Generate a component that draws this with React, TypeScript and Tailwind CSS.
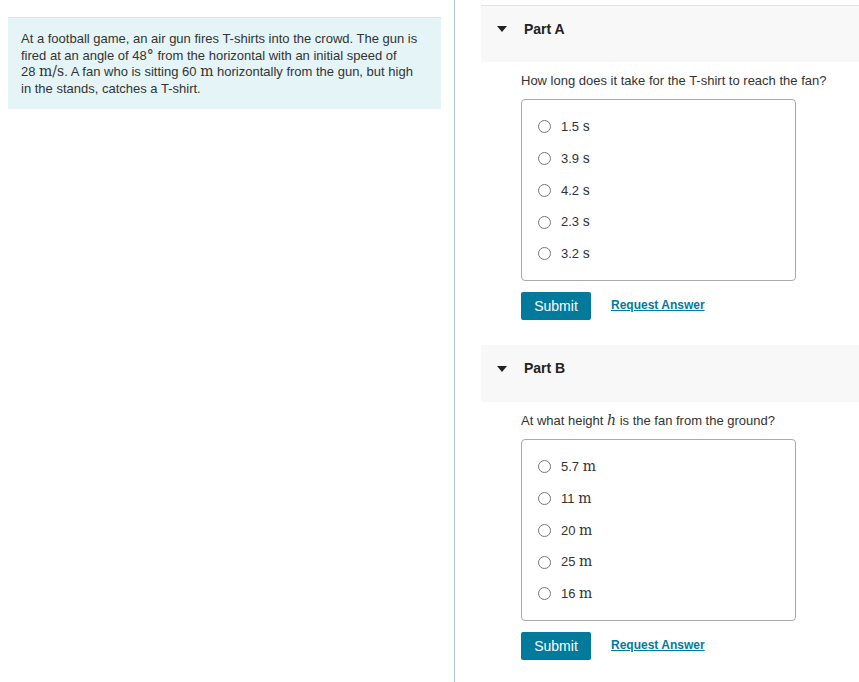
import React from "react";

const sans = { fontFamily: '"Liberation Sans", Arial, sans-serif' };

function M({ children, italic }: { children: React.ReactNode; italic?: boolean }) {
  return (
    <span
      className={`font-serif text-[14px] leading-none ${italic ? "italic" : ""}`}
      style={{ fontFamily: '"DejaVu Serif", "Liberation Serif", serif' }}
    >
      {children}
    </span>
  );
}

function Radio({ num, unit }: { num: string; unit: string }) {
  return (
    <label className="flex items-center h-[31.75px]">
      <span className="w-[13px] h-[13px] rounded-full border border-[#767676] bg-white mr-[10px]" />
      <span>
        {num} <M>{unit}</M>
      </span>
    </label>
  );
}

function Part({
  title,
  question,
  options,
  unit,
  border,
}: {
  title: string;
  question: React.ReactNode;
  options: string[];
  unit: string;
  border?: boolean;
}) {
  return (
    <div>
      <div
        className={`flex items-center h-[57px] bg-[#f8f8f8] pl-[16px] pb-[10px] ${
          border ? "border-t border-[#e2e2e2]" : ""
        }`}
      >
        <span className="w-0 h-0 border-l-[5px] border-r-[5px] border-t-[6px] border-l-transparent border-r-transparent border-t-[#222] mr-[17px]" />
        <span className="font-bold text-[14px] text-[#222]">{title}</span>
      </div>
      <div className="pl-[40px]">
        <p className="mt-[10px] h-[17px] leading-[17px]">{question}</p>
        <div className="mt-[10px] w-[275px] h-[182px] border border-[#aaaaaa] rounded-[4px] pt-[11px] pl-[16px]">
          {options.map((o) => (
            <Radio key={o} num={o} unit={unit} />
          ))}
        </div>
        <div className="flex items-center mt-[11px]">
          <button className="w-[70px] h-[28px] rounded-[2px] bg-[#017a9c] text-white text-[14px]">
            Submit
          </button>
          <a className="ml-[20px] text-[#017a9c] font-bold underline text-[12px] -mt-[2px]">
            Request Answer
          </a>
        </div>
      </div>
    </div>
  );
}

export default function App() {
  return (
    <div className="flex w-[859px] h-[682px] bg-white text-[13px] text-[#333]" style={sans}>
      <div className="w-[454px] pl-[8px] pr-[13px] pt-[17px]">
        <div className="bg-[#e5f5f7] border-t border-[#dde3e6] h-[92px] pl-[13px] pt-[13px] leading-[16.7px]">
          At a football game, an air gun fires T-shirts into the crowd. The gun is
          <br />
          fired at an angle of 48<M>°</M> from the horizontal with an initial speed of
          <br />
          28 <M>m/s</M>. A fan who is sitting 60 <M>m</M> horizontally from the gun, but high
          <br />
          in the stands, catches a T-shirt.
        </div>
      </div>
      <div className="w-px bg-[#afc3d4]" />
      <div className="flex-1 pl-[26px] pt-[5px]">
        <Part
          border
          title="Part A"
          question="How long does it take for the T-shirt to reach the fan?"
          options={["1.5", "3.9", "4.2", "2.3", "3.2"]}
          unit="s"
        />
        <div className="h-[25px]" />
        <Part
          title="Part B"
          question={
            <>
              At what height <M italic>h</M> is the fan from the ground?
            </>
          }
          options={["5.7", "11", "20", "25", "16"]}
          unit="m"
        />
      </div>
    </div>
  );
}
